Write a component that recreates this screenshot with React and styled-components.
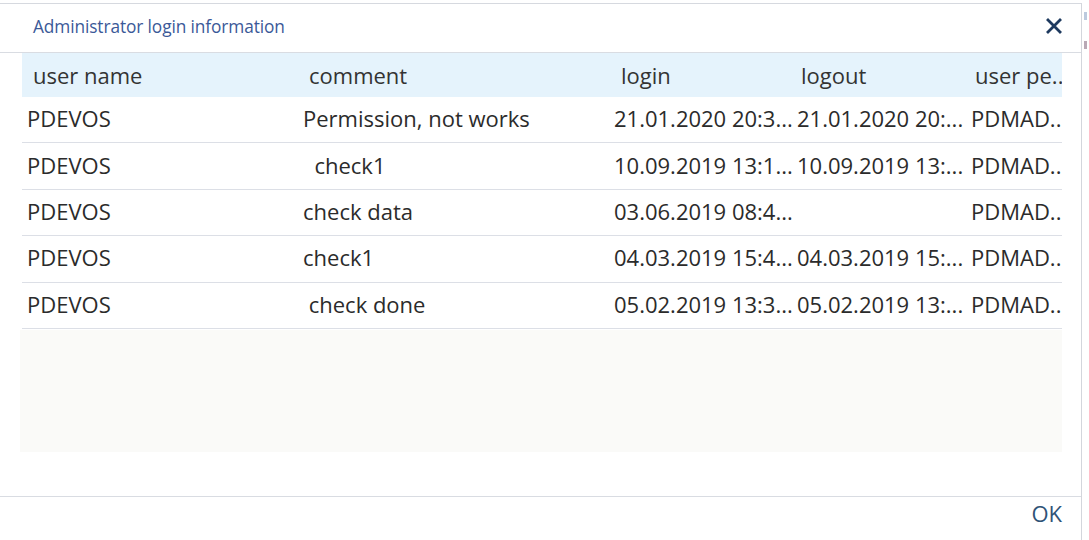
import React from 'react'
import styled, { createGlobalStyle } from 'styled-components'

const columns = [
  { key: 'user', title: 'user name', width: '276px', indent: 11 },
  { key: 'comment', title: 'comment', width: '311px', indent: 11 },
  { key: 'login', title: 'login', width: '183px', indent: 12 },
  { key: 'logout', title: 'logout', width: '174px', indent: 9 },
  { key: 'perm', title: 'user pe..', width: '1fr', indent: 9 },
]

const rows = [
  { id: 1, user: 'PDEVOS', comment: 'Permission, not works', login: '21.01.2020 20:3...', logout: '21.01.2020 20:...', perm: 'PDMAD..' },
  { id: 2, user: 'PDEVOS', comment: '  check1', login: '10.09.2019 13:1...', logout: '10.09.2019 13:...', perm: 'PDMAD..' },
  { id: 3, user: 'PDEVOS', comment: 'check data', login: '03.06.2019 08:4...', logout: '', perm: 'PDMAD..' },
  { id: 4, user: 'PDEVOS', comment: 'check1', login: '04.03.2019 15:4...', logout: '04.03.2019 15:...', perm: 'PDMAD..' },
  { id: 5, user: 'PDEVOS', comment: ' check done', login: '05.02.2019 13:3...', logout: '05.02.2019 13:...', perm: 'PDMAD..' },
]

const template = columns.map((c) => c.width).join(' ')

const App = () => {
  return (
    <>
      <GlobalStyle />
      <Page>
        <Dialog>
          <TitleBar>
            <Title>Administrator login information</Title>
            <CloseButton type='button' aria-label='close'>
              <svg width='16' height='16' viewBox='0 0 16 16'>
                <path d='M2 2 L14 14 M14 2 L2 14' stroke='#1e3a5f' strokeWidth='2.8' strokeLinecap='square' />
              </svg>
            </CloseButton>
          </TitleBar>

          <Body>
            <Table>
              <HeaderRow>
                {columns.map((col) => (
                  <HeaderCell key={col.key} $indent={col.indent}>{col.title}</HeaderCell>
                ))}
              </HeaderRow>
              {rows.map((row) => (
                <Row key={row.id}>
                  {columns.map((col) => (
                    <Cell key={col.key}>{row[col.key]}</Cell>
                  ))}
                </Row>
              ))}
            </Table>
            <Filler />
          </Body>

          <Footer>
            <OkButton type='button'>OK</OkButton>
          </Footer>
        </Dialog>
        <Backdrop>
          <Mark $top={9} $color='#8fa6c8' />
          <Mark $top={38} $color='#8a6f86' />
        </Backdrop>
      </Page>
    </>
  )
}

const GlobalStyle = createGlobalStyle`
  html, body {
    margin: 0;
    padding: 0;
    background: #ffffff;
  }
  body {
    font-family: 'Open Sans', 'Noto Sans', sans-serif;
    color: #2b2b2b;
  }
  * {
    box-sizing: border-box;
  }
`

const Page = styled.div`
  display: flex;
  width: 1089px;
  height: 540px;
  padding-top: 3px;
  overflow: hidden;
`

const Dialog = styled.div`
  width: 1082px;
  height: 537px;
  display: flex;
  flex-direction: column;
  background: #ffffff;
  border-top: 1px solid #d6d9df;
  border-right: 1px solid #d3d6dc;
`

const TitleBar = styled.div`
  height: 49px;
  flex: none;
  display: flex;
  align-items: center;
  justify-content: space-between;
  padding: 0 17px 4px 33px;
  border-bottom: 1px solid #d9dce2;
`

const Title = styled.h1`
  margin: 0;
  font-size: 17.3px;
  font-weight: 400;
  color: #3b5998;
  letter-spacing: -0.1px;
`

const CloseButton = styled.button`
  display: flex;
  align-items: center;
  justify-content: center;
  width: 20px;
  height: 20px;
  padding: 0;
  border: none;
  background: transparent;
  cursor: pointer;
`

const Body = styled.div`
  flex: 1;
  display: flex;
  flex-direction: column;
  padding: 0 19px 0 22px;
`

const Table = styled.div`
  display: flex;
  flex-direction: column;
  font-size: 22px;
`

const HeaderRow = styled.div`
  display: grid;
  grid-template-columns: ${template};
  height: 44px;
  align-items: center;
  background: #e5f3fc;
  color: #333333;
  padding-bottom: 1px;
`

const HeaderCell = styled.div`
  padding-left: ${(p) => p.$indent}px;
  white-space: nowrap;
  overflow: hidden;
`

const Row = styled.div`
  display: grid;
  grid-template-columns: ${template};
  height: 46.4px;
  align-items: center;
  border-bottom: 1px solid #dcdfe6;
  padding-bottom: 3px;
`

const Cell = styled.div`
  padding-left: 5px;
  white-space: pre;
  overflow: hidden;
  color: #2b2b2b;
`

const Filler = styled.div`
  height: 122px;
  margin-top: 1px;
  margin-left: -2px;
  background: #fafaf8;
`

const Footer = styled.div`
  height: 44px;
  flex: none;
  display: flex;
  justify-content: flex-end;
  align-items: flex-start;
  padding: 1px 19px 0 0;
  border-top: 1px solid #d9dce2;
`

const OkButton = styled.button`
  padding: 0;
  border: none;
  background: transparent;
  font-family: 'Open Sans', 'Noto Sans', sans-serif;
  font-size: 22px;
  color: #2f5377;
  cursor: pointer;
`

const Backdrop = styled.div`
  flex: 1;
  position: relative;
`

const Mark = styled.span`
  position: absolute;
  left: 2px;
  top: ${(p) => p.$top}px;
  width: 3px;
  height: 8px;
  background: ${(p) => p.$color};
  opacity: 0.6;
`

export default App
